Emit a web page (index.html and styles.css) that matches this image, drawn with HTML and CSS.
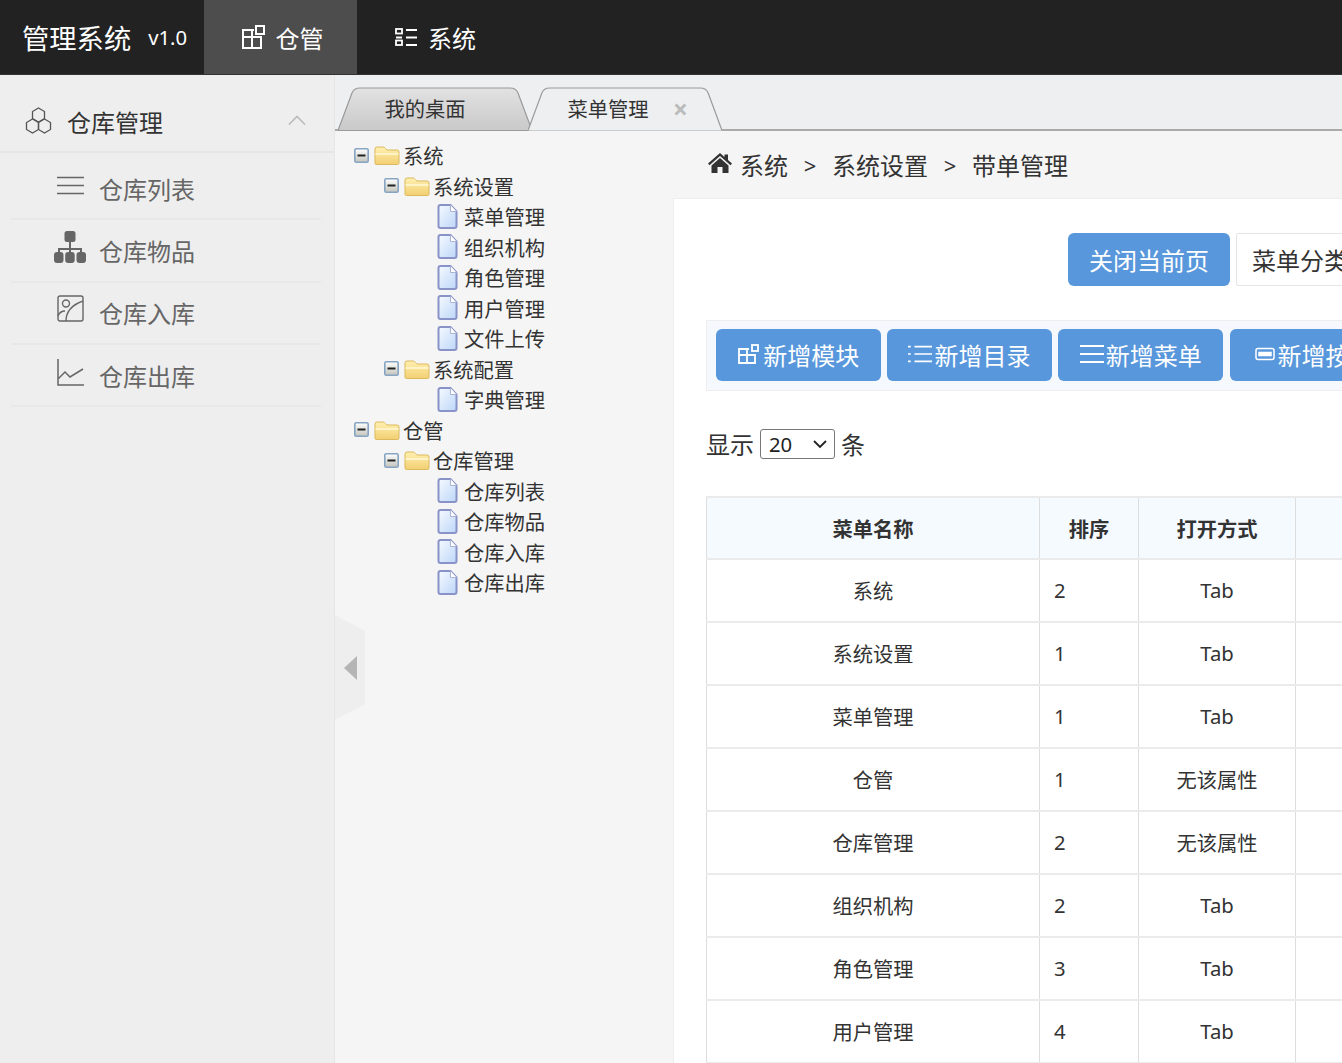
FILE: index.html
```html
<!DOCTYPE html>
<html lang="zh-CN">
<head>
  <meta charset="UTF-8" />
  <meta name="viewport" content="width=device-width, initial-scale=1.0"/>
  <title>管理系统</title>
  <link rel="stylesheet" href="styles.css">
</head>
<body>

  <svg class="defs" width="0" height="0">
    <defs>
      <linearGradient id="folderFill" x1="0" y1="0" x2="0" y2="1">
        <stop offset="0" stop-color="#fff0b0"/>
        <stop offset="1" stop-color="#f2cf72"/>
      </linearGradient>
      <linearGradient id="fileFill" x1="0" y1="0" x2="1" y2="1">
        <stop offset="0" stop-color="#f6faff"/>
        <stop offset="1" stop-color="#bcd6f8"/>
      </linearGradient>
      <linearGradient id="toggleFill" x1="0" y1="0" x2="0" y2="1">
        <stop offset="0" stop-color="#ffffff"/>
        <stop offset="1" stop-color="#c4c4bc"/>
      </linearGradient>
      <linearGradient id="tabOff" x1="0" y1="0" x2="0" y2="1">
        <stop offset="0" stop-color="#e2e2e2"/>
        <stop offset="1" stop-color="#c9c9c9"/>
      </linearGradient>
      <symbol id="i-toggle" viewBox="0 0 15 15">
        <rect x="0.8" y="0.8" width="13.4" height="13.400" rx="1.500" fill="url(#toggleFill)" stroke="#86a5c3" stroke-width="1.600"/>
        <rect x="3.500" y="6.500" width="8" height="2" fill="#222"/>
      </symbol>
      <symbol id="i-folder" viewBox="0 0 26 20">
        <path d="M1 18V4q0-2 2-2h6q1.500 0 2.500 1.500L13 5h10q2 0 2 2v11q0 1.500-1.500 1.500h-21Q1 19.500 1 18z" fill="url(#folderFill)" stroke="#dcb95c" stroke-width="1"/>
        <path d="M1.500 9h23" stroke="#fff8d8" stroke-width="1.500"/>
      </symbol>
      <symbol id="i-file" viewBox="0 0 21 25">
        <path d="M1.500 3q0-2 2-2h10l6 6.500V22q0 2-2 2h-14q-2 0-2-2z" fill="url(#fileFill)" stroke="#8a93c8" stroke-width="2"/>
        <path d="M13.500 1v6.500h6" fill="#fff" stroke="#aab2d6" stroke-width="1"/>
      </symbol>
    </defs>
  </svg>

  <header class="topbar">
    <div class="brand"><span class="brand-name">管理系统</span><span class="brand-ver">v1.0</span></div>
    <a class="top-item top-item-active">
      <svg class="top-icon" viewBox="0 0 23 24" fill="none" stroke="#fff" stroke-width="2">
        <path d="M12 5H1v18h18V12H1M10 5v18"/>
        <rect x="14" y="1" width="8" height="8"/>
      </svg>
      <span>仓管</span>
    </a>
    <a class="top-item">
      <svg class="top-icon" viewBox="0 0 22 19" fill="none" stroke="#fff" stroke-width="1.800">
        <rect x="1" y="1" width="6" height="4.500"/>
        <rect x="1" y="12.500" width="6" height="4.500"/>
        <path d="M11 2h11M11 9.500h11M11 17h11M1 9.500h6"/>
      </svg>
      <span>系统</span>
    </a>
  </header>

  <div class="layout">
    <aside class="sidebar">
      <div class="side-head">
        <svg class="hex-icon" viewBox="0 0 27 28" fill="none" stroke="#555" stroke-width="1.300">
          <path d="M13.500 1l6 3.500v7l-6 3.500-6-3.500v-7z"/>
          <path d="M7.500 12l6 3.500v7l-6 3.500-6-3.500v-7z"/>
          <path d="M19.500 12l6 3.500v7l-6 3.500-6-3.500v-7z"/>
        </svg>
        <span class="side-title">仓库管理</span>
        <svg class="chevron" viewBox="0 0 18 10" fill="none" stroke="#bbb" stroke-width="1.600"><path d="M1 9.500L9 1.500l8 8"/></svg>
      </div>
      <ul class="side-list">
        <li class="side-item">
          <svg class="side-icon" viewBox="0 0 27 20" fill="none" stroke="#666" stroke-width="1.700"><path d="M0 2h27M0 10h27M0 18h27"/></svg>
          <span>仓库列表</span>
        </li>
        <li class="side-item side-item-org">
          <svg class="side-icon" viewBox="0 0 32 32" fill="#666">
            <rect x="10.500" y="0" width="11" height="11" rx="2.500"/>
            <path d="M15 10h2v7h11v5h-2v-3H17v3h-2v-3H6v3H4v-5h11z"/>
            <rect x="0" y="21" width="9.500" height="11" rx="3"/>
            <rect x="11.200" y="21" width="9.500" height="11" rx="3"/>
            <rect x="22.500" y="21" width="9.500" height="11" rx="3"/>
          </svg>
          <span>仓库物品</span>
        </li>
        <li class="side-item side-item-pic">
          <svg class="side-icon" viewBox="0 0 27 27" fill="none" stroke="#666" stroke-width="1.400">
            <rect x="1" y="1" width="25" height="25" rx="2"/>
            <circle cx="9" cy="8.500" r="3.500"/>
            <path d="M1 21q2-5 7-5M9 26q0-14 17-20"/>
          </svg>
          <span>仓库入库</span>
        </li>
        <li class="side-item">
          <svg class="side-icon" viewBox="0 0 27 27" fill="none" stroke="#666" stroke-width="1.500">
            <path d="M1 0v26h26M1 20l7-7 5 5 13-8"/>
          </svg>
          <span>仓库出库</span>
        </li>
      </ul>
    </aside>

    <main class="main">
      <nav class="tabs">
        <div class="tab tab-off">
          <svg class="tab-shape" viewBox="0 0 194 44" preserveAspectRatio="none">
            <path d="M0 43.500L14 6q2-5 8-5h150q6 0 8 5l14 37.500z" fill="url(#tabOff)" stroke="#9a9a9a" stroke-width="1.200"/>
          </svg>
          <span class="tab-text">我的桌面</span>
        </div>
        <div class="tab tab-on">
          <svg class="tab-shape" viewBox="0 0 196 44" preserveAspectRatio="none">
            <path d="M0 43.500L14 6q2-5 8-5h152q6 0 8 5l14 37.500" fill="#eeeff1" stroke="#9a9a9a" stroke-width="1.200"/>
          </svg>
          <span class="tab-text">菜单管理</span>
          <span class="tab-close">×</span>
        </div>
      </nav>

      <div class="content">
        <ul class="tree">
          <li class="node"><svg class="tg"><use href="#i-toggle"/></svg><svg class="fd"><use href="#i-folder"/></svg><span>系统</span></li>
          <li class="node lv2"><svg class="tg"><use href="#i-toggle"/></svg><svg class="fd"><use href="#i-folder"/></svg><span>系统设置</span></li>
          <li class="node lv3"><svg class="fl"><use href="#i-file"/></svg><span>菜单管理</span></li>
          <li class="node lv3"><svg class="fl"><use href="#i-file"/></svg><span>组织机构</span></li>
          <li class="node lv3"><svg class="fl"><use href="#i-file"/></svg><span>角色管理</span></li>
          <li class="node lv3"><svg class="fl"><use href="#i-file"/></svg><span>用户管理</span></li>
          <li class="node lv3"><svg class="fl"><use href="#i-file"/></svg><span>文件上传</span></li>
          <li class="node lv2"><svg class="tg"><use href="#i-toggle"/></svg><svg class="fd"><use href="#i-folder"/></svg><span>系统配置</span></li>
          <li class="node lv3"><svg class="fl"><use href="#i-file"/></svg><span>字典管理</span></li>
          <li class="node"><svg class="tg"><use href="#i-toggle"/></svg><svg class="fd"><use href="#i-folder"/></svg><span>仓管</span></li>
          <li class="node lv2"><svg class="tg"><use href="#i-toggle"/></svg><svg class="fd"><use href="#i-folder"/></svg><span>仓库管理</span></li>
          <li class="node lv3"><svg class="fl"><use href="#i-file"/></svg><span>仓库列表</span></li>
          <li class="node lv3"><svg class="fl"><use href="#i-file"/></svg><span>仓库物品</span></li>
          <li class="node lv3"><svg class="fl"><use href="#i-file"/></svg><span>仓库入库</span></li>
          <li class="node lv3"><svg class="fl"><use href="#i-file"/></svg><span>仓库出库</span></li>
        </ul>

        <section class="page">
          <div class="crumbs">
            <svg class="home" viewBox="0 0 24 20" fill="#333">
              <path d="M12 0L0 10.500l1.500 1.700L12 3l10.500 9.200 1.500-1.700-4-3.500V1.500h-3.500v2.500z"/>
              <path d="M12 5L3.500 12.500V20h6v-6h5v6h6v-7.500z"/>
            </svg>
            <span>系统</span><span class="sep">&gt;</span><span>系统设置</span><span class="sep">&gt;</span><span>带单管理</span>
          </div>

          <div class="panel">
            <div class="panel-top">
              <button class="btn">关闭当前页</button>
              <button class="btn-plain">菜单分类</button>
            </div>

            <div class="toolbar">
              <button class="btn btn-tool">
                <svg class="btn-icon" viewBox="0 0 22 20" fill="none" stroke="#fff" stroke-width="1.800"><path d="M11 5H1v14h16v-8H1M9 5v14"/><rect x="14" y="1" width="6" height="6"/></svg>新增模块
              </button>
              <button class="btn btn-tool">
                <svg class="btn-icon" viewBox="0 0 26 20" fill="none" stroke="#fff" stroke-width="1.800"><path d="M0 2h3M7 2h19M0 10h3M7 10h19M0 18h3M7 18h19"/></svg>新增目录
              </button>
              <button class="btn btn-tool">
                <svg class="btn-icon" viewBox="0 0 24 20" fill="none" stroke="#fff" stroke-width="1.800"><path d="M0 2h24M0 10h24M0 18h24"/></svg>新增菜单
              </button>
              <button class="btn btn-tool">
                <svg class="btn-icon btn-icon-small" viewBox="0 0 20 13" fill="none" stroke="#fff" stroke-width="1.500"><rect x="1" y="1" width="18" height="11" rx="2"/><rect x="4" y="5" width="12" height="3" fill="#fff"/></svg>新增按钮
              </button>
            </div>

            <div class="page-size">
              <span>显示</span>
              <div class="select-wrap">
                <select class="size-select"><option>20</option></select>
                <svg class="select-arrow" viewBox="0 0 14 9" fill="none" stroke="#222" stroke-width="1.800"><path d="M1 1l6 6 6-6"/></svg>
              </div>
              <span>条</span>
            </div>

            <table class="grid">
              <colgroup>
                <col class="col-name"><col class="col-order"><col class="col-open"><col class="col-rest">
              </colgroup>
              <thead>
                <tr><th>菜单名称</th><th>排序</th><th>打开方式</th><th></th></tr>
              </thead>
              <tbody>
                <tr><td>系统</td><td class="num">2</td><td>Tab</td><td></td></tr>
                <tr><td>系统设置</td><td class="num">1</td><td>Tab</td><td></td></tr>
                <tr><td>菜单管理</td><td class="num">1</td><td>Tab</td><td></td></tr>
                <tr><td>仓管</td><td class="num">1</td><td>无该属性</td><td></td></tr>
                <tr><td>仓库管理</td><td class="num">2</td><td>无该属性</td><td></td></tr>
                <tr><td>组织机构</td><td class="num">2</td><td>Tab</td><td></td></tr>
                <tr><td>角色管理</td><td class="num">3</td><td>Tab</td><td></td></tr>
                <tr><td>用户管理</td><td class="num">4</td><td>Tab</td><td></td></tr>
              </tbody>
            </table>
          </div>
        </section>

        <div class="collapse"><i class="collapse-arrow"></i></div>
      </div>
    </main>
  </div>

</body>
</html>
```

FILE: styles.css
```css
* {
  box-sizing: border-box;
}
html, body {
  height: 100%;
}
body {
  margin: 0;
  overflow: hidden;
  font-family: "Noto Sans", "Noto Sans CJK SC", sans-serif;
  color: #333;
  background: #f5f5f5;
  display: flex;
  flex-direction: column;
}
ul {
  list-style: none;
  margin: 0;
  padding: 0;
}
.defs {
  position: absolute;
}

/* top bar */
.topbar {
  flex: none;
  height: 75px;
  background: #222;
  display: flex;
  color: #fff;
  border-bottom: 1px solid #333;
}
.brand {
  width: 204px;
  padding-left: 22px;
  display: flex;
  align-items: center;
  white-space: nowrap;
}
.brand-name {
  font-size: 27.3px;
}
.brand-ver {
  font-size: 20.3px;
  margin-left: 17px;
}
.top-item {
  width: 153px;
  padding-left: 4px;
  display: flex;
  align-items: center;
  justify-content: center;
  gap: 11px;
  font-size: 24px;
}
.top-item-active {
  background: #4d4d4d;
}
.top-item-active .top-icon {
  width: 23px;
  height: 24px;
}
.top-icon {
  width: 22px;
  height: 19px;
}

.layout {
  flex: 1;
  display: flex;
  min-height: 0;
}

/* left menu */
.sidebar {
  flex: none;
  width: 335px;
  background: #eee;
  border-right: 1px solid #e6e6e6;
}
.side-head {
  height: 78px;
  padding: 16px 28px 0 25px;
  display: flex;
  align-items: center;
  border-bottom: 2px solid #e6e6e6;
}
.hex-icon {
  width: 27px;
  height: 28px;
  margin-top: -1px;
}
.side-title {
  font-size: 24px;
  margin-left: 15px;
  flex: 1;
}
.chevron {
  width: 18px;
  height: 10px;
  margin-top: -2px;
}
.side-list {
  padding: 5px 13px 0 11px;
}
.side-item {
  height: 62.3px;
  padding-left: 46px;
  display: flex;
  align-items: center;
  gap: 15px;
  font-size: 24px;
  color: #666;
  border-bottom: 2px solid #e8e8e8;
}
.side-icon {
  width: 27px;
  height: 27px;
  margin-top: -6px;
  flex: none;
}
.side-item-org .side-icon {
  width: 32px;
  height: 32px;
  margin-left: -3px;
  margin-right: -2px;
}
.side-item-pic .side-icon {
  margin-top: -8px;
}

/* tabs */
.main {
  flex: 1;
  min-width: 0;
  display: flex;
  flex-direction: column;
}
.tabs {
  flex: none;
  height: 56px;
  padding: 12px 0 0 3px;
  background: #eeeff1;
  border-bottom: 2px solid #aaa;
  display: flex;
}
.tab {
  position: relative;
  height: 44px;
  display: flex;
  align-items: center;
  justify-content: center;
  font-size: 20.3px;
}
.tab-off {
  width: 194px;
}
.tab-on {
  width: 194px;
  margin-left: -4px;
}
.tab-shape {
  position: absolute;
  left: 0;
  top: 0;
  width: 100%;
  height: 100%;
}
.tab-text {
  position: relative;
  margin-top: -2px;
}
.tab-off .tab-text {
  margin-left: -20px;
}
.tab-on .tab-text {
  margin-left: -34px;
}
.tab-close {
  position: absolute;
  left: 145px;
  top: 5px;
  color: #bbb;
  font-size: 26px;
  font-weight: bold;
  line-height: 34px;
}

/* tree + page */
.content {
  flex: 1;
  min-height: 0;
  display: flex;
  position: relative;
  background: #f5f5f5;
}
.tree {
  flex: none;
  width: 338px;
  padding-top: 9px;
  font-size: 20.3px;
}
.node {
  height: 30.5px;
  padding-left: 19px;
  display: flex;
  align-items: center;
  white-space: nowrap;
}
.node.lv2 {
  padding-left: 49px;
}
.node.lv3 {
  padding-left: 102px;
}
.tg {
  width: 15px;
  height: 15px;
}
.fd {
  width: 26px;
  height: 20px;
  margin: 0 3px 0 5px;
}
.fl {
  width: 21px;
  height: 25px;
  margin-right: 6px;
}
.page {
  flex: 1;
  min-width: 0;
  display: flex;
  flex-direction: column;
}
.crumbs {
  flex: none;
  height: 67px;
  padding-left: 35px;
  display: flex;
  align-items: center;
  font-size: 24px;
}
.home {
  width: 24px;
  height: 20px;
  margin: -4px 8px 0 0;
}
.sep {
  margin: 0 15.7px;
  font-size: 22px;
}
.panel {
  flex: 1;
  min-height: 0;
  background: #fff;
  border-top: 1px solid #eee;
  border-left: 1px solid #eee;
  padding: 34px 0 0 32px;
  overflow: hidden;
}
.panel-top {
  display: flex;
  justify-content: flex-start;
  gap: 6px;
  padding-left: 362px;
  white-space: nowrap;
}
.btn {
  height: 53px;
  width: 162px;
  flex: none;
  border: 0;
  border-radius: 6px;
  background: #5897dc;
  color: #fff;
  font: inherit;
  font-size: 24px;
}
.btn-plain {
  height: 53px;
  width: 180px;
  flex: none;
  padding-left: 15px;
  text-align: left;
  background: #fff;
  border: 1px solid #e5e5e5;
  border-radius: 2px;
  color: #333;
  font: inherit;
  font-size: 24px;
}
.toolbar {
  margin-top: 34px;
  height: 71px;
  width: 900px;
  padding: 8px 9px;
  background: #f5f9fd;
  border: 1px solid #eee;
  display: flex;
  gap: 6.6px;
}
.btn-tool {
  width: 164.6px;
  height: 52px;
  padding: 0 0 2px;
  display: flex;
  align-items: center;
  justify-content: center;
  gap: 2px;
  white-space: nowrap;
}
.btn-tool:last-child {
  width: 180px;
  justify-content: flex-start;
  padding-left: 25px;
}
.btn-icon {
  width: 24px;
  height: 20px;
  flex: none;
}
.btn-icon-small {
  width: 20px;
  margin-right: 1px;
}
.page-size {
  margin-top: 35px;
  display: flex;
  align-items: center;
  gap: 6px;
  font-size: 24px;
}
.select-wrap {
  position: relative;
  height: 30px;
}
.size-select {
  display: block;
  width: 75px;
  height: 30px;
  padding-left: 8px;
  font: inherit;
  font-size: 20.3px;
  line-height: 28px;
  background: #fff;
  color: #222;
  border: 1px solid #777;
  border-radius: 3px;
  appearance: none;
}
.select-arrow {
  position: absolute;
  right: 8px;
  top: 11px;
  width: 14px;
  height: 9px;
}

/* table */
.grid {
  margin-top: 35px;
  width: 900px;
  table-layout: fixed;
  border-collapse: collapse;
  font-size: 20.3px;
  text-align: center;
}
.col-name {
  width: 333px;
}
.col-order {
  width: 99px;
}
.col-open {
  width: 157px;
}
.grid th,
.grid td {
  height: 63px;
  padding: 0 14px 2px;
  border-left: 1px solid #ddd;
  border-right: 1px solid #ddd;
  border-top: 2px solid #ebebeb;
  border-bottom: 2px solid #ebebeb;
}
.grid th {
  height: 62px;
  padding-bottom: 0;
  background: #f5faff;
}
.grid .num {
  text-align: left;
}

/* sidebar collapse handle */
.collapse {
  position: absolute;
  left: 0;
  top: 484px;
  width: 30px;
  height: 105px;
  background: #eee;
  clip-path: polygon(0 0, 100% 15%, 100% 85%, 0 100%);
  display: flex;
  align-items: center;
  justify-content: center;
}
.collapse-arrow {
  width: 0;
  height: 0;
  border-top: 12px solid transparent;
  border-bottom: 12px solid transparent;
  border-right: 13px solid #b5b5b5;
}
```
